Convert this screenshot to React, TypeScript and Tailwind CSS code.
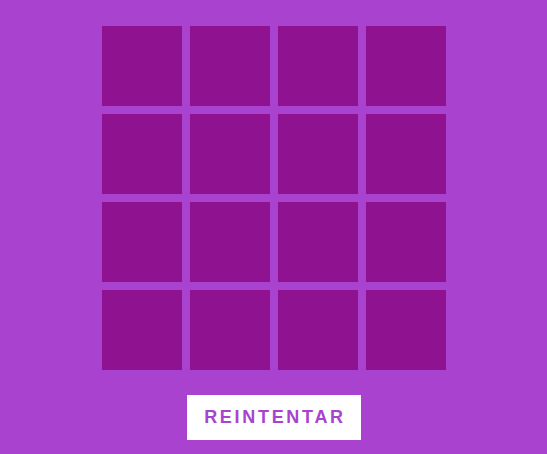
export default function App() {
  const cells = Array.from({ length: 16 }, (_, i) => i);

  return (
    <div className="flex min-h-[454px] w-full flex-col items-center bg-[#a943cf] pt-[26px] font-['Liberation_Sans',Arial,sans-serif]">
      {/* ── Board ── */}
      <div className="grid grid-cols-[repeat(4,80px)] gap-2">
        {cells.map((i) => (
          <div key={i} className="h-20 w-20 bg-[#8f1391]" />
        ))}
      </div>

      {/* ── Retry ── */}
      <button className="mt-[25px] flex h-[45px] w-[174px] items-center justify-center bg-white pl-[3px] text-[18px] font-bold tracking-[2.7px] text-[#a943cf]">
        REINTENTAR
      </button>
    </div>
  );
}
